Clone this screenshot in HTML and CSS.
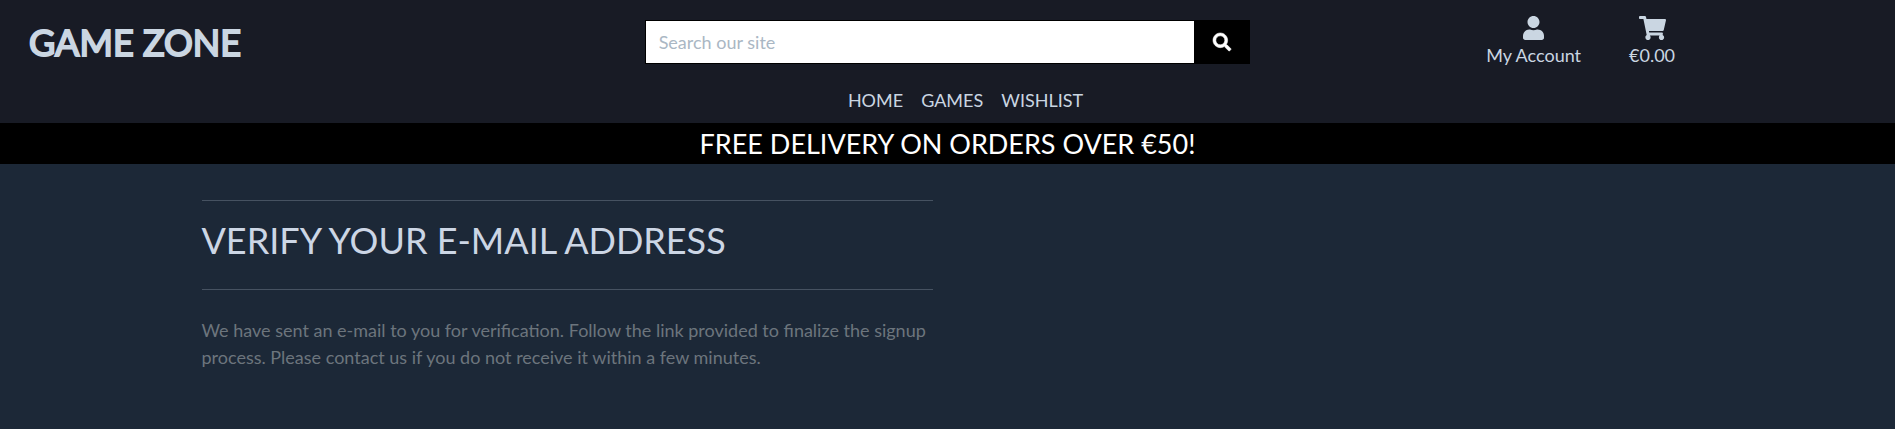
FILE: index.html
```html
<!DOCTYPE html>
<html lang="en">
<head>
<meta charset="utf-8">
<title>Game Zone</title>
<link rel="stylesheet" href="styles.css">
</head>
<body>
<header class="site-header">
  <div class="topbar">
    <a class="brand" href="#">GAME ZONE</a>
    <form class="search" role="search">
      <input class="search-input" type="text" placeholder="Search our site" aria-label="Search our site">
      <button class="search-button" type="button" aria-label="Search">
        <svg class="search-icon" viewBox="0 0 512 512" aria-hidden="true"><path fill="currentColor" stroke="currentColor" stroke-width="16" d="M505 442.700L405.300 343c-4.500-4.500-10.600-7-17-7H372c27.600-35.300 44-79.700 44-128C416 93.100 322.900 0 208 0S0 93.100 0 208s93.100 208 208 208c48.300 0 92.700-16.400 128-44v16.300c0 6.400 2.500 12.500 7 17l99.700 99.700c9.400 9.400 24.600 9.400 33.900 0l28.300-28.300c9.400-9.400 9.400-24.600.1-34zM208 336c-70.700 0-128-57.200-128-128 0-70.700 57.200-128 128-128 70.700 0 128 57.200 128 128 0 70.700-57.200 128-128 128z"/></svg>
      </button>
    </form>
    <div class="shortcuts">
      <a class="shortcut" href="#">
        <svg class="shortcut-icon" viewBox="0 0 448 512" aria-hidden="true"><path fill="currentColor" d="M224 256c70.700 0 128-57.300 128-128S294.700 0 224 0 96 57.300 96 128s57.300 128 128 128zm89.600 32h-16.700c-22.200 10.200-46.900 16-72.900 16s-50.600-5.800-72.900-16h-16.700C60.200 288 0 348.200 0 422.400V464c0 26.500 21.500 48 48 48h352c26.500 0 48-21.500 48-48v-41.600c0-74.200-60.200-134.400-134.400-134.400z"/></svg>
        <span>My Account</span>
      </a>
      <a class="shortcut" href="#">
        <svg class="shortcut-icon" viewBox="0 0 576 512" aria-hidden="true"><path fill="currentColor" d="M528.120 301.319l47.273-208C578.806 78.301 567.391 64 551.990 64H159.208l-9.166-44.810C147.758 8.021 137.930 0 126.529 0H24C10.745 0 0 10.745 0 24v16c0 13.255 10.745 24 24 24h69.883l70.248 343.435C147.325 417.100 136 435.222 136 456c0 30.928 25.072 56 56 56s56-25.072 56-56c0-15.674-6.447-29.835-16.824-40h209.647C430.447 426.165 424 440.326 424 456c0 30.928 25.072 56 56 56s56-25.072 56-56c0-22.172-12.888-41.332-31.579-50.405l5.517-24.276c3.413-15.018-8.002-29.319-23.403-29.319H218.117l-6.545-32h293.145c11.206 0 20.920-7.754 23.403-18.681z"/></svg>
        <span>€0.00</span>
      </a>
    </div>
  </div>
  <nav class="main-nav" aria-label="Main">
    <a class="nav-link" href="#">HOME</a>
    <a class="nav-link" href="#">GAMES</a>
    <a class="nav-link" href="#">WISHLIST</a>
  </nav>
</header>
<p class="delivery-banner">FREE DELIVERY ON ORDERS OVER €50!</p>
<main class="content">
  <section class="message">
    <h1 class="message-title">VERIFY YOUR E-MAIL ADDRESS</h1>
    <p class="message-text">We have sent an e-mail to you for verification. Follow the link provided to finalize the signup process. Please contact us if you do not receive it within a few minutes.</p>
  </section>
</main>
</body>
</html>
```
FILE: styles.css
```css
* {
  box-sizing: border-box;
}

body {
  margin: 0;
  min-height: 100vh;
  background: #1c2837;
  color: #ccd6e5;
  font: 400 18px/27px Lato, "Noto Sans", sans-serif;
}

a {
  color: inherit;
  text-decoration: none;
}

.site-header {
  background: #181b25;
  color: #cad6e2;
}

.topbar {
  display: grid;
  grid-template-columns: repeat(3, 1fr);
  align-items: center;
  height: 84px;
}

.brand {
  padding-left: 29px;
  font-size: 36px;
  line-height: 48px;
  -webkit-text-stroke: 2px currentColor;
}

.search {
  display: flex;
  height: 44px;
  margin: 0 13px;
}

.search-input {
  flex: 1;
  min-width: 0;
  padding: 0 13px;
  border: 1px solid #000;
  border-right: 0;
  border-radius: 0;
  background: #fff;
  color: #495057;
  font: inherit;
}

.search-input::placeholder {
  color: #aab7c4;
  opacity: 1;
}

.search-button {
  display: flex;
  align-items: center;
  justify-content: center;
  width: 56px;
  padding: 0;
  border: 0;
  background: #000;
  color: #fff;
}

.search-icon {
  width: 18px;
  height: 18px;
  overflow: visible;
}

.shortcuts {
  display: flex;
  justify-content: center;
  gap: 48px;
  padding-left: 3px;
}

.shortcut {
  display: flex;
  flex-direction: column;
  align-items: center;
  gap: 2px;
}

.shortcut-icon {
  height: 24px;
}

.main-nav {
  display: flex;
  justify-content: center;
  gap: 18px;
  padding: 3px 0 9px 36px;
}

.delivery-banner {
  margin: 0;
  padding: 4px 0;
  background: #000;
  color: #fff;
  font-size: 27px;
  line-height: 33px;
  text-align: center;
}

.content {
  width: 80%;
  margin: 0 auto;
  padding: 36px 12px;
}

.message {
  width: 49%;
}

.message-title {
  margin: 0 0 27px;
  padding: 18px 0 27px;
  border: solid #465261;
  border-width: 1px 0;
  font-size: 36px;
  line-height: 43px;
  font-weight: 400;
}

.message-text {
  margin: 0;
  color: #6c757d;
}
```
